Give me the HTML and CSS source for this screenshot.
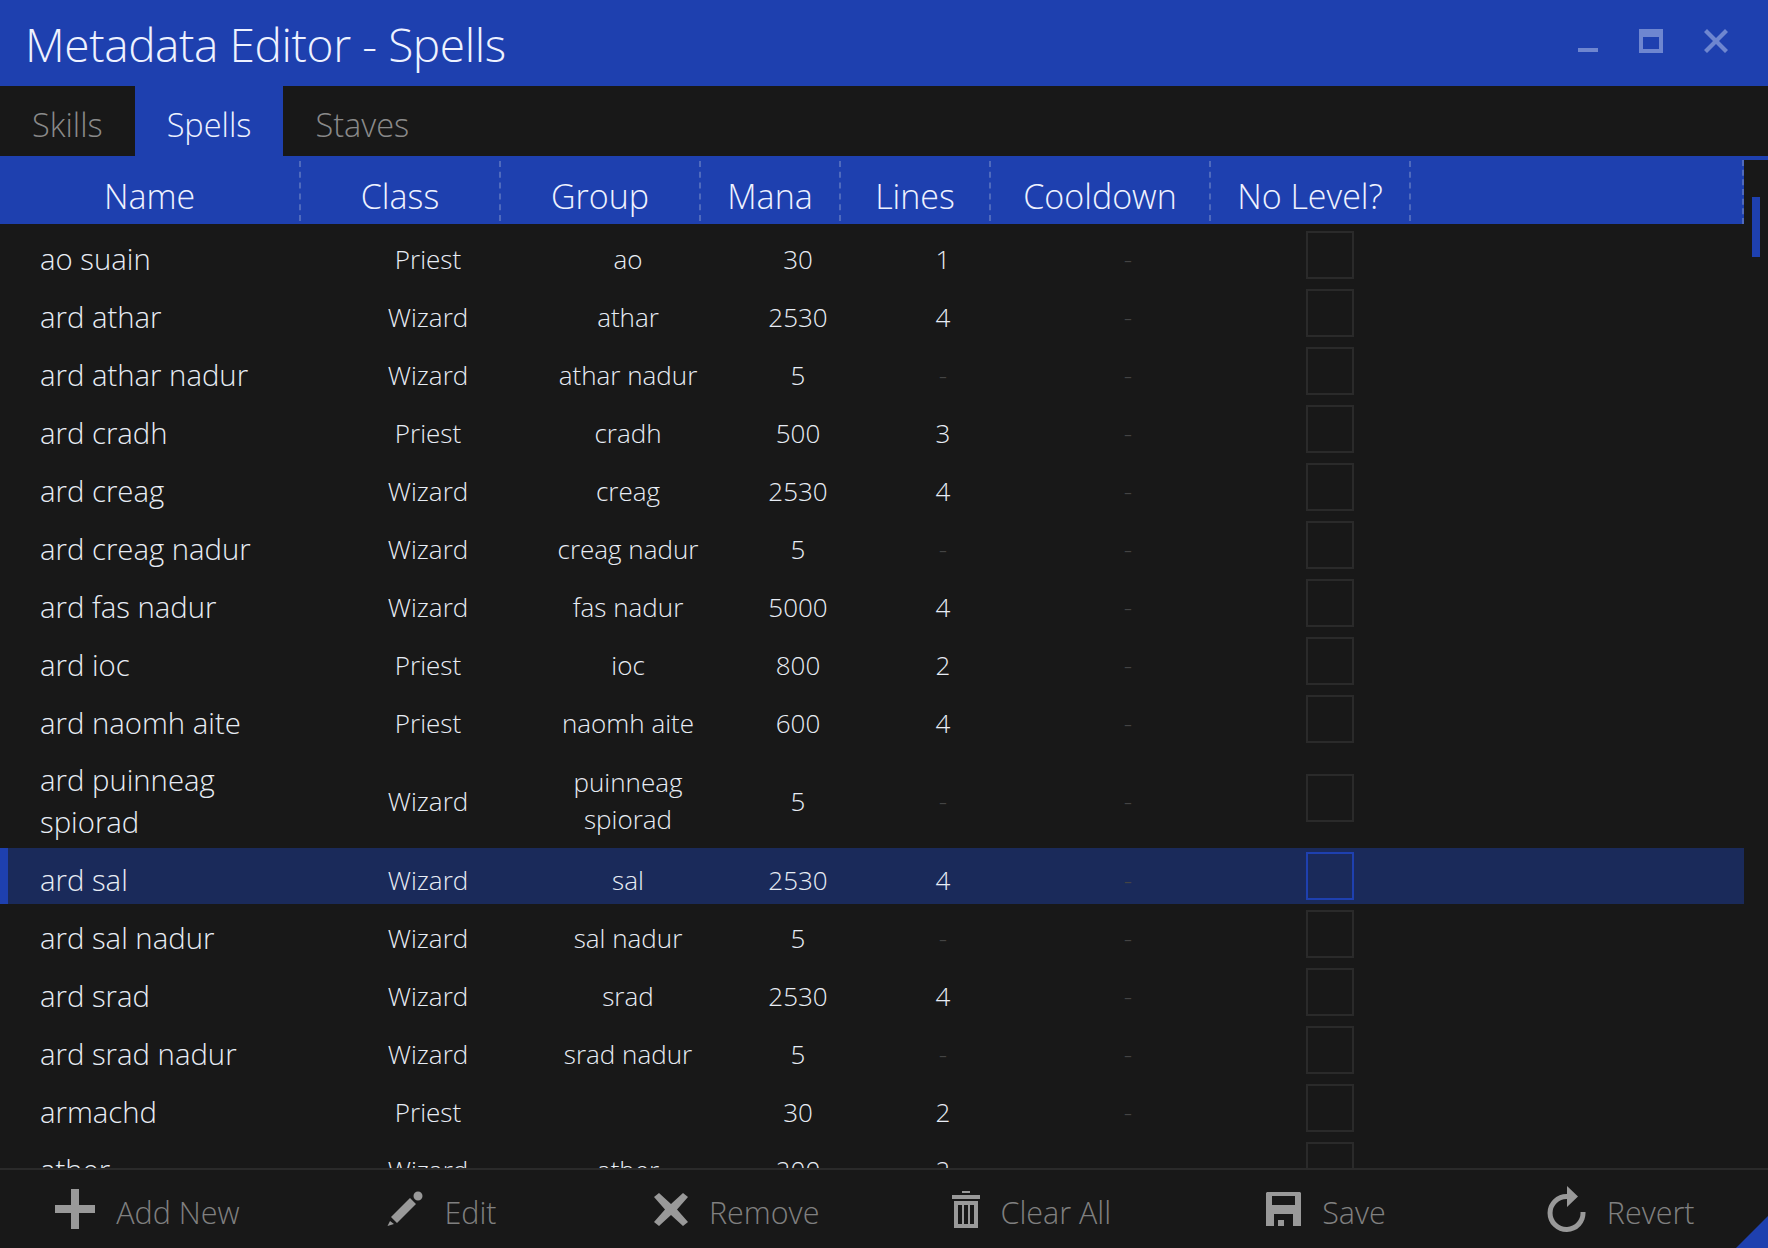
FILE: index.html
```html
<!DOCTYPE html>
<html lang="en">
<head>
    <meta charset="UTF-8">
    <title>Metadata Editor - Spells</title>
    <link rel="stylesheet" href="styles.css">
</head>
<body>
    <div class="window">
        <div class="titlebar">
            <div class="title">Metadata Editor - Spells</div>
            <div class="winBtns">
                <svg class="winMin" width="20" height="4" viewBox="0 0 20 4"><rect width="20" height="4"/></svg>
                <svg class="winMax" width="24" height="24" viewBox="0 0 24 24"><path fill-rule="evenodd" d="M0 0H24V24H0ZM4 8V20H20V8Z"/></svg>
                <svg class="winClose" width="24" height="24" viewBox="0 0 24 24"><path d="M3 0L12 9L21 0L24 3L15 12L24 21L21 24L12 15L3 24L0 21L9 12L0 3Z"/></svg>
            </div>
        </div>

        <div class="tabs">
            <div class="tab">Skills</div>
            <div class="tab active">Spells</div>
            <div class="tab">Staves</div>
        </div>

        <div class="tableArea">
            <div class="table">
                <div class="header">
                    <div class="hcell">Name</div>
                    <div class="hcell">Class</div>
                    <div class="hcell">Group</div>
                    <div class="hcell">Mana</div>
                    <div class="hcell">Lines</div>
                    <div class="hcell">Cooldown</div>
                    <div class="hcell">No Level?</div>
                </div>
                <div class="rows">
                    <div class="row"><div class="name">ao suain</div><div>Priest</div><div>ao</div><div>30</div><div>1</div><div class="dim">-</div><div class="check"><span></span></div></div>
                    <div class="row"><div class="name">ard athar</div><div>Wizard</div><div>athar</div><div>2530</div><div>4</div><div class="dim">-</div><div class="check"><span></span></div></div>
                    <div class="row"><div class="name">ard athar nadur</div><div>Wizard</div><div>athar nadur</div><div>5</div><div class="dim">-</div><div class="dim">-</div><div class="check"><span></span></div></div>
                    <div class="row"><div class="name">ard cradh</div><div>Priest</div><div>cradh</div><div>500</div><div>3</div><div class="dim">-</div><div class="check"><span></span></div></div>
                    <div class="row"><div class="name">ard creag</div><div>Wizard</div><div>creag</div><div>2530</div><div>4</div><div class="dim">-</div><div class="check"><span></span></div></div>
                    <div class="row"><div class="name">ard creag nadur</div><div>Wizard</div><div>creag nadur</div><div>5</div><div class="dim">-</div><div class="dim">-</div><div class="check"><span></span></div></div>
                    <div class="row"><div class="name">ard fas nadur</div><div>Wizard</div><div>fas nadur</div><div>5000</div><div>4</div><div class="dim">-</div><div class="check"><span></span></div></div>
                    <div class="row"><div class="name">ard ioc</div><div>Priest</div><div>ioc</div><div>800</div><div>2</div><div class="dim">-</div><div class="check"><span></span></div></div>
                    <div class="row"><div class="name">ard naomh aite</div><div>Priest</div><div>naomh aite</div><div>600</div><div>4</div><div class="dim">-</div><div class="check"><span></span></div></div>
                    <div class="row tall"><div class="name">ard puinneag spiorad</div><div>Wizard</div><div class="group2">puinneag spiorad</div><div>5</div><div class="dim">-</div><div class="dim">-</div><div class="check"><span></span></div></div>
                    <div class="row selected"><div class="name">ard sal</div><div>Wizard</div><div>sal</div><div>2530</div><div>4</div><div class="dim">-</div><div class="check"><span></span></div></div>
                    <div class="row"><div class="name">ard sal nadur</div><div>Wizard</div><div>sal nadur</div><div>5</div><div class="dim">-</div><div class="dim">-</div><div class="check"><span></span></div></div>
                    <div class="row"><div class="name">ard srad</div><div>Wizard</div><div>srad</div><div>2530</div><div>4</div><div class="dim">-</div><div class="check"><span></span></div></div>
                    <div class="row"><div class="name">ard srad nadur</div><div>Wizard</div><div>srad nadur</div><div>5</div><div class="dim">-</div><div class="dim">-</div><div class="check"><span></span></div></div>
                    <div class="row"><div class="name">armachd</div><div>Priest</div><div></div><div>30</div><div>2</div><div class="dim">-</div><div class="check"><span></span></div></div>
                    <div class="row"><div class="name">ather</div><div>Wizard</div><div>ather</div><div>200</div><div>2</div><div class="dim">-</div><div class="check"><span></span></div></div>
                </div>
            </div>
            <div class="scrollbar"><div class="thumb"></div></div>
        </div>

        <div class="footer">
            <div class="btn">
                <svg width="40" height="40" viewBox="0 0 40 40"><path d="M16 0H24V16H40V24H24V40H16V24H0V16H16Z"/></svg>
                <span>Add New</span>
            </div>
            <div class="btn">
                <svg width="36" height="36" viewBox="0 0 36 36"><path d="M4 26L10 32L29 13L23 7ZM0.500 35L3 30L7 33ZM26.500 5A4.500 4.500 0 1 0 35.500 5A4.500 4.500 0 1 0 26.500 5Z"/></svg>
                <span>Edit</span>
            </div>
            <div class="btn">
                <svg width="34" height="33" viewBox="0 0 34 33"><path d="M0 4L5 0L17 11L29 0L34 4L23 16.500L34 29L29 33L17 22L5 33L0 29L11 16.500Z"/></svg>
                <span>Remove</span>
            </div>
            <div class="btn">
                <svg width="28" height="37" viewBox="0 0 28 37"><path fill-rule="evenodd" d="M10 0H18V2H10ZM0 4H28V8H0ZM2 10H26V37H2ZM6 14V33H10V14ZM12 14V33H16V14ZM18 14V33H22V14Z"/></svg>
                <span>Clear All</span>
            </div>
            <div class="btn">
                <svg width="35" height="34" viewBox="0 0 35 34"><path fill-rule="evenodd" d="M1 0H34L35 1V34H0V1ZM6 4V13H29V4ZM8 22V34H12V28H18V34H27V22Z"/></svg>
                <span>Save</span>
            </div>
            <div class="btn">
                <svg width="39" height="46" viewBox="0 0 39 46"><path d="M20 0L31 10.500L20 21V13A14 14 0 1 0 33.500 26H38.500A19 19 0 1 1 20 8Z"/></svg>
                <span>Revert</span>
            </div>
        </div>
        <div class="grip"></div>
    </div>
</body>
</html>
```

FILE: styles.css
```css
* {
    box-sizing: border-box;
}

html, body {
    margin: 0;
    padding: 0;
    background-color: #181818;
}

body {
    font-family: "Open Sans", "Noto Sans", sans-serif;
    font-weight: 300;
    color: #e8edf5;
}

.window {
    position: relative;
    display: flex;
    flex-direction: column;
    width: 1768px;
    height: 1248px;
    overflow: hidden;
}

.titlebar {
    display: flex;
    justify-content: space-between;
    flex: 0 0 86px;
    background-color: #1e40af;
}

.title {
    padding: 3px 0 0 25px;
    font-size: 46px;
    letter-spacing: -0.4px;
    line-height: 82px;
    color: #eef2ff;
}

.winBtns {
    display: flex;
    align-items: flex-start;
    gap: 41px;
    padding: 29px 40px 0 0;
}

.winBtns svg {
    fill: #6e86d0;
}

.winMin {
    margin-top: 19px;
}

.tabs {
    display: flex;
    flex: 0 0 74px;
    border-bottom: 4px solid #1e40af;
}

.tab {
    padding: 8px 32px 0;
    font-size: 32.5px;
    line-height: 62px;
    color: #8a8a8a;
}

.tab.active {
    background-color: #1e40af;
    color: #eef2ff;
}

.tableArea {
    display: flex;
    flex: 1;
    min-height: 0;
    overflow: hidden;
}

.table {
    flex: 0 0 1744px;
    min-width: 0;
}

.header {
    display: grid;
    grid-template-columns: 301px 200px 200px 140px 150px 220px 200px 1fr;
    height: 64px;
    padding-top: 1px;
    padding-bottom: 3px;
    background-color: #1e40af;
    border-right: 2px dashed #4f6abd;
}

.hcell {
    height: 60px;
    padding-top: 11px;
    font-size: 34px;
    line-height: 48px;
    text-align: center;
    color: #eef2ff;
    border-right: 2px dashed #4f6abd;
}

.rows {
    display: flex;
    flex-direction: column;
    gap: 2px;
    padding-top: 3px;
}

.row {
    display: grid;
    grid-template-columns: 300px 200px 200px 140px 150px 220px 200px;
    align-items: center;
    flex: 0 0 56px;
    padding-left: 28px;
    font-size: 26px;
    text-align: center;
}

.row > div {
    padding-top: 7px;
}

.row.tall {
    flex-basis: 97px;
}

.row.selected {
    padding-left: 20px;
    background-color: #1a2a5a;
    border-left: 8px solid #1e40af;
}

.row .name {
    margin-left: -28px;
    padding-left: 40px;
    padding-right: 30px;
    font-size: 29.3px;
    line-height: 42px;
    text-align: left;
}

.row .group2 {
    padding-left: 40px;
    padding-right: 40px;
    line-height: 37px;
}

.dim {
    color: #444;
}

.row .check {
    display: flex;
    padding-top: 0;
    padding-left: 68px;
}

.check span {
    width: 48px;
    height: 48px;
    border: 2px solid #2a2a2a;
}

.selected .check span {
    border-color: #1e40af;
}

.scrollbar {
    flex: 0 0 24px;
    padding: 37px 0 0 8px;
}

.thumb {
    width: 8px;
    height: 60px;
    background-color: #1e40af;
}

.footer {
    display: grid;
    grid-template-columns: repeat(6, 1fr);
    flex: 0 0 80px;
    border-top: 2px solid #2a2a2a;
    background-color: #181818;
}

.btn {
    display: flex;
    justify-content: center;
    align-items: center;
    gap: 21px;
    font-size: 30.5px;
    color: #808080;
}

.btn span {
    padding-top: 5px;
}

.btn svg {
    fill: #999;
}

.grip {
    position: absolute;
    right: 0;
    bottom: 0;
    width: 32px;
    height: 32px;
    background-color: #1e40af;
    clip-path: polygon(100% 0, 100% 100%, 0 100%);
}
```
